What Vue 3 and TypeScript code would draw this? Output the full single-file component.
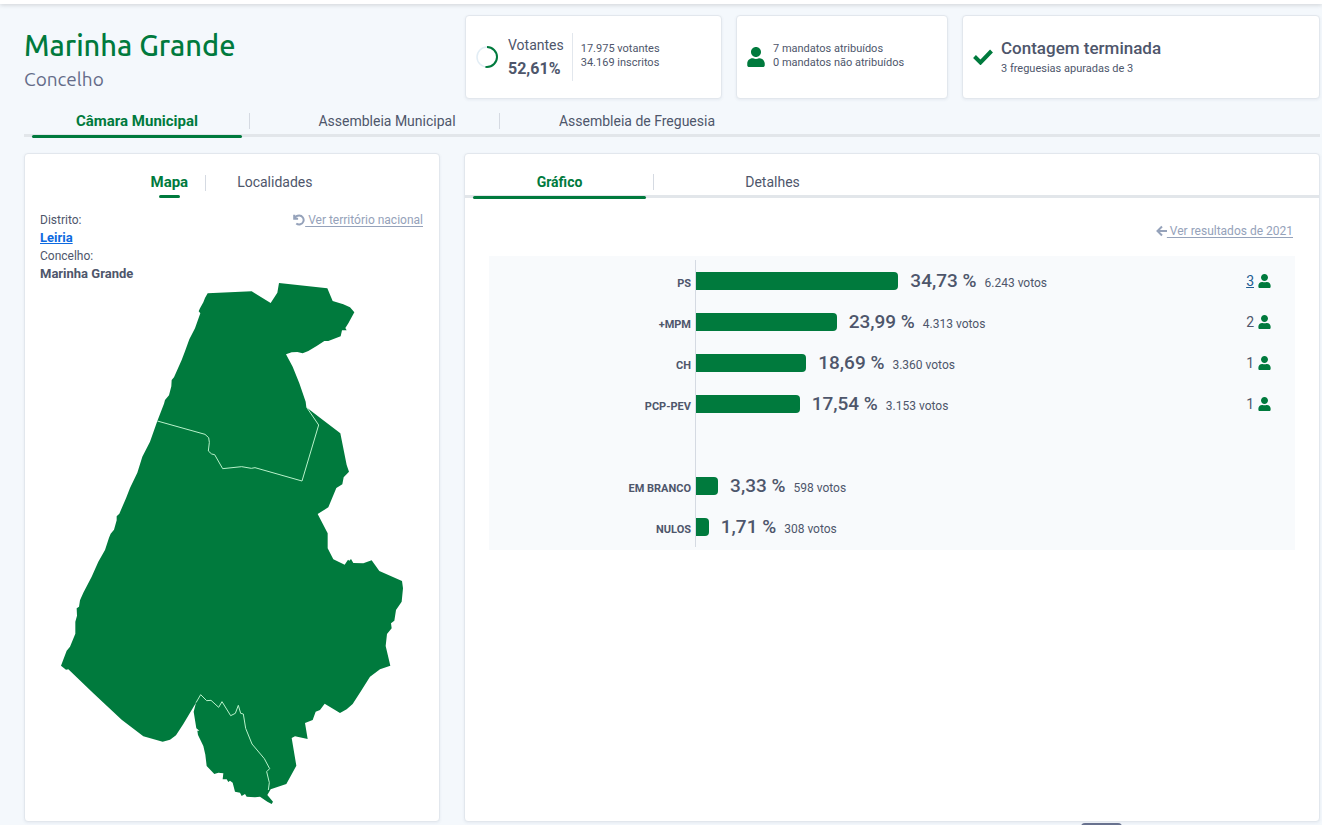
<script setup lang="ts">
import { ref } from 'vue'

interface ResultRow {
  label: string
  percent: number
  votes: string
  seats?: number
}

const contests = ['Câmara Municipal', 'Assembleia Municipal', 'Assembleia de Freguesia']
const mapViews = ['Mapa', 'Localidades']
const resultViews = ['Gráfico', 'Detalhes']

const contest = ref(contests[0])
const mapView = ref(mapViews[0])
const resultView = ref(resultViews[0])

const parties: ResultRow[] = [
  { label: 'PS', percent: 34.73, votes: '6.243', seats: 3 },
  { label: '+MPM', percent: 23.99, votes: '4.313', seats: 2 },
  { label: 'CH', percent: 18.69, votes: '3.360', seats: 1 },
  { label: 'PCP-PEV', percent: 17.54, votes: '3.153', seats: 1 },
]
const others: ResultRow[] = [
  { label: 'EM BRANCO', percent: 3.33, votes: '598' },
  { label: 'NULOS', percent: 1.71, votes: '308' },
]
const groups = [parties, others]

const formatPercent = (value: number) => value.toFixed(2).replace('.', ',') + ' %'

const personPath =
  'M224 256c70.700 0 128-57.300 128-128S294.700 0 224 0 96 57.300 96 128s57.300 128 128 128zm89.600 32h-16.700c-22.200 10.200-46.900 16-72.900 16s-50.600-5.800-72.900-16h-16.700C60.200 288 0 348.200 0 422.400V464c0 26.500 21.500 48 48 48h352c26.500 0 48-21.500 48-48v-41.600c0-74.200-60.200-134.400-134.400-134.400z'

const outline =
  '443,31 575,25 632,60 652,29 657,0 802,16 818,54 850,64 870,73 883,88 865,121 856,135 860,142 846,142 842,160 805,174 793,174 770,189 745,204 728,211 712,207 695,208 678,214 698,251 718,301 737,356 739,373 780,404 841,451 860,546 867,566 851,583 847,604 829,615 805,673 773,693 803,751 803,796 820,829 854,845 864,830 868,833 873,828 880,840 910,841 935,832 958,864 1026,894 1029,916 1025,956 1008,981 1003,1013 993,1021 995,1036 981,1053 977,1089 991,1148 960,1159 930,1181 905,1221 878,1263 860,1279 840,1290 794,1262 780,1281 767,1286 758,1311 735,1320 743,1368 705,1360 695,1365 709,1448 679,1503 632,1519 622,1536 639,1556 635,1563 622,1556 600,1541 585,1543 560,1541 555,1533 545,1539 540,1529 525,1526 518,1499 510,1493 505,1497 500,1489 488,1489 490,1471 475,1469 463,1473 440,1449 436,1415 430,1389 414,1356 412,1343 418,1343 409,1336 401,1286 408,1259 370,1323 348,1357 330,1370 308,1376 250,1360 185,1310 100,1231 25,1159 18,1160 3,1148 20,1103 30,1091 46,1052 46,1016 51,998 50,976 57,971 60,952 70,929 95,881 115,836 135,801 147,764 152,752 162,740 170,712 170,700 178,692 198,646 210,615 232,569 247,521 270,476 292,414 312,362 315,351 327,337 334,310 335,291 342,283 365,231 375,205 388,169 405,136 421,91 416,85 420,76 430,58 435,45'
const northBorder =
  '292,414 435,454 446,464 448,478 445,504 455,513 464,515 488,557 545,551 574,556 585,554 726,594 776,426 740,373'
const southBorder =
  '408,1259 422,1235 440,1253 453,1252 476,1273 486,1256 512,1298 526,1291 535,1267 542,1291 550,1293 557,1336 576,1383 613,1427 629,1457 620,1466 628,1499 625,1521'
</script>

<template>
  <div class="page">
    <div class="topbar"></div>
    <main class="content">
      <header class="columns">
        <div class="place">
          <h1>Marinha Grande</h1>
          <p>Concelho</p>
        </div>
        <div class="stats">
          <section class="card stat">
            <svg class="ring" viewBox="0 0 22 22" aria-hidden="true">
              <circle cx="11" cy="11" r="10" fill="none" stroke="#e2edf5" stroke-width="1.500" />
              <circle
                cx="11" cy="11" r="10" fill="none" stroke="#007a3d" stroke-width="2"
                pathLength="100" stroke-dasharray="52.610 100" transform="rotate(-90 11 11)"
              />
            </svg>
            <div class="turnout">
              <span>Votantes</span>
              <strong>52,61%</strong>
            </div>
            <div class="small">17.975 votantes<br />34.169 inscritos</div>
          </section>
          <section class="card stat">
            <svg class="person-lg" viewBox="0 0 448 512" aria-hidden="true"><path :d="personPath" /></svg>
            <div class="small">7 mandatos atribuídos<br />0 mandatos não atribuídos</div>
          </section>
          <section class="card stat">
            <svg class="check" viewBox="0 0 20 16" aria-hidden="true">
              <path d="M1.500 7.500l6 6L18.500 2" fill="none" stroke="#007a3d" stroke-width="4" />
            </svg>
            <div class="status">
              <h2>Contagem terminada</h2>
              <p class="small">3 freguesias apuradas de 3</p>
            </div>
          </section>
        </div>
      </header>

      <nav class="tabs contest-tabs">
        <button
          v-for="name in contests" :key="name" type="button"
          :class="{ active: contest === name }" @click="contest = name"
        >{{ name }}</button>
      </nav>

      <div class="columns panels">
        <section class="card map-card">
          <nav class="map-tabs">
            <button
              v-for="name in mapViews" :key="name" type="button"
              :class="{ active: mapView === name }" @click="mapView = name"
            >{{ name }}</button>
          </nav>
          <div class="location">
            <div>
              <div>Distrito:</div>
              <a class="district" href="#leiria">Leiria</a>
              <div>Concelho:</div>
              <strong>Marinha Grande</strong>
            </div>
            <a class="muted-link" href="#nacional">
              <svg class="undo" viewBox="0 0 12 12" aria-hidden="true">
                <path d="M1.200 .8v3.900h3.900M1.500 4.400C2.500 2.500 4.200 1.500 6.200 1.500a4.500 4.500 0 1 1-2.900 8" />
              </svg>
              <span>&nbsp;Ver território nacional</span>
            </a>
          </div>
          <svg class="map" viewBox="0 0 1032 1566" role="img" aria-label="Marinha Grande">
            <polygon :points="outline" fill="#007a3d" />
            <g fill="none" stroke="#b9f2cb" stroke-width="3" stroke-linejoin="round">
              <polyline :points="northBorder" />
              <polyline :points="southBorder" />
            </g>
          </svg>
        </section>

        <section class="card">
          <nav class="tabs result-tabs">
            <button
              v-for="name in resultViews" :key="name" type="button"
              :class="{ active: resultView === name }" @click="resultView = name"
            >{{ name }}</button>
          </nav>
          <div class="results">
            <a class="muted-link" href="#2021">
              <svg class="arrow" viewBox="0 0 11 12" aria-hidden="true">
                <path d="M6 1.500L1.500 6 6 10.500M1.500 6H11" />
              </svg>
              <span>&nbsp;Ver resultados de 2021</span>
            </a>
            <div class="chart">
              <ul v-for="(rows, index) in groups" :key="index">
                <li v-for="row in rows" :key="row.label">
                  <span class="label">{{ row.label }}</span>
                  <div class="track">
                    <div class="bar" :style="{ '--share': row.percent }"></div>
                    <span class="percent">{{ formatPercent(row.percent) }}</span>
                    <span class="votes">{{ row.votes }} votos</span>
                  </div>
                  <div class="seats">
                    <template v-if="row.seats">
                      <a v-if="row.seats > 2" href="#eleitos">{{ row.seats }}</a>
                      <span v-else>{{ row.seats }}</span>
                      <svg viewBox="0 0 448 512" aria-hidden="true"><path :d="personPath" /></svg>
                    </template>
                  </div>
                </li>
              </ul>
            </div>
          </div>
        </section>
      </div>
    </main>
    <button class="drawer" type="button" aria-label="Abrir"></button>
  </div>
</template>

<style>
body {
  margin: 0;
  background: #f4f8fc;
}
</style>

<style scoped>
.page {
  min-height: 100vh;
  color: #4e566b;
  font-family: Roboto, 'Liberation Sans', sans-serif;
  font-size: 14px;
}
.page * {
  box-sizing: border-box;
}
h1, h2, p, ul {
  margin: 0;
  padding: 0;
}
button {
  padding: 0;
  border: 0;
  background: none;
  color: inherit;
  font: inherit;
  cursor: pointer;
}
.topbar {
  height: 4px;
  background: #fff;
  box-shadow: 0 1px 4px rgba(0, 0, 0, 0.16);
}
.content {
  padding: 11px 2px 3px 24px;
}
.columns {
  display: grid;
  grid-template-columns: 52fr 107fr;
  gap: 24px;
}
.place {
  padding-top: 10px;
  font-family: Ubuntu, 'Noto Sans', sans-serif;
}
.place h1 {
  color: #007a3d;
  font-size: 29px;
  font-weight: 500;
  line-height: 40px;
}
.place p {
  color: #646c89;
  font-size: 19px;
  line-height: 28px;
}
.stats {
  display: grid;
  grid-template-columns: 257fr 212fr 358fr;
  gap: 14px;
  padding-left: 1px;
}
.card {
  border: 1px solid #e2e7ed;
  border-radius: 4px;
  background: #fff;
  box-shadow: 0 1px 3px rgba(60, 80, 110, 0.08);
}
.stat {
  display: flex;
  align-items: center;
  gap: 8px;
  height: 84px;
  padding: 0 10px;
  white-space: nowrap;
}
.small {
  font-size: 11px;
  line-height: 14px;
}
.stat > .small,
.status {
  padding-bottom: 2px;
}
.stat > svg {
  flex: none;
}
.ring {
  width: 22px;
  height: 22px;
}
.turnout {
  display: flex;
  flex-direction: column;
  height: 48px;
  margin-left: 2px;
  padding-right: 8px;
  border-right: 1px solid #e2e7ed;
  line-height: 24px;
}
.turnout strong {
  font-size: 16px;
}
.person-lg {
  width: 18px;
  height: 20px;
  fill: #007a3d;
}
.check {
  width: 20px;
  height: 16px;
}
.stat h2 {
  margin-bottom: 2px;
  font-size: 17px;
  font-weight: 500;
  line-height: 24px;
}
.tabs {
  display: flex;
  gap: 24px;
  border-bottom: 3px solid #e2e6ea;
}
.tabs button {
  position: relative;
  height: 28px;
  padding-top: 2px;
}
.tabs button:not(:last-child)::before {
  content: '';
  position: absolute;
  top: 7px;
  right: 0;
  width: 1px;
  height: 16px;
  background: #d5dae2;
}
.active {
  color: #007a3d;
  font-weight: 700;
}
.active::after {
  content: '';
  position: absolute;
  right: 8px;
  bottom: -4px;
  left: 8px;
  height: 3px;
  border-radius: 2px;
  background: #007a3d;
}
.contest-tabs {
  margin-top: 7px;
}
.contest-tabs button {
  width: 226px;
}
.contest-tabs .active,
.map-tabs .active {
  font-size: 15px;
}
.panels {
  margin-top: 16px;
}
.map-card {
  padding: 16px 16px 16px 15px;
}
.map-tabs {
  display: flex;
  justify-content: center;
  gap: 49px;
  height: 25px;
}
.map-tabs button {
  position: relative;
  height: 24px;
  line-height: 24px;
}
.map-tabs button:not(:last-child)::before {
  content: '';
  position: absolute;
  top: 5px;
  right: -18px;
  width: 1px;
  height: 16px;
  background: #d5dae2;
}
.location {
  display: flex;
  justify-content: space-between;
  align-items: flex-start;
  margin-top: 16px;
  font-size: 12px;
  line-height: 18px;
}
.location > div > * {
  display: block;
  height: 18px;
}
.district,
.location strong {
  font-size: 13px;
  font-weight: 700;
}
.district {
  color: #0d6ae0;
}
.muted-link {
  display: flex;
  align-items: center;
  color: #95a2ba;
  font-size: 12px;
  line-height: 18px;
  text-decoration: none;
}
.muted-link span {
  text-decoration: underline;
  text-underline-offset: 2px;
}
.muted-link svg {
  height: 12px;
  fill: none;
  stroke: currentColor;
  stroke-width: 2;
}
.undo {
  width: 12px;
}
.arrow {
  width: 11px;
}
.map {
  display: block;
  width: 100%;
  max-width: 344px;
  margin: 0 auto;
}
.result-tabs {
  padding-top: 13px;
}
.result-tabs button {
  width: 189px;
}
.results {
  padding: 24px;
}
.results > .muted-link {
  justify-content: flex-end;
  padding-right: 2px;
}
.chart {
  display: grid;
  gap: 41px;
  margin-top: 16px;
  padding: 4px 24px 3px 0;
  background: linear-gradient(#d5dae2, #d5dae2) 206px 4px / 1px calc(100% - 7px) no-repeat #f8fafc;
}
.chart li {
  display: grid;
  grid-template-columns: 202px 1fr 40px;
  column-gap: 5px;
  align-items: center;
  height: 41px;
}
.label {
  padding-top: 5px;
  font-size: 11px;
  font-weight: 700;
  text-align: right;
}
.track {
  display: flex;
  align-items: baseline;
  white-space: nowrap;
}
.bar {
  align-self: center;
  width: calc(3px + var(--share) * 1.083%);
  height: 18px;
  border-radius: 0 4px 4px 0;
  background: #007a3d;
}
.percent {
  margin-left: 12px;
  font-size: 19px;
  font-weight: 500;
}
.votes {
  margin-left: 8px;
  font-size: 12px;
}
.seats {
  display: flex;
  align-items: center;
  justify-content: flex-end;
  gap: 4px;
}
.seats a {
  color: #1d5c91;
}
.seats svg {
  width: 13px;
  height: 14px;
  fill: #007a3d;
}
.drawer {
  position: fixed;
  right: 200px;
  bottom: -18px;
  width: 41px;
  height: 20px;
  border-radius: 4px;
  background: #68728f;
}
</style>
